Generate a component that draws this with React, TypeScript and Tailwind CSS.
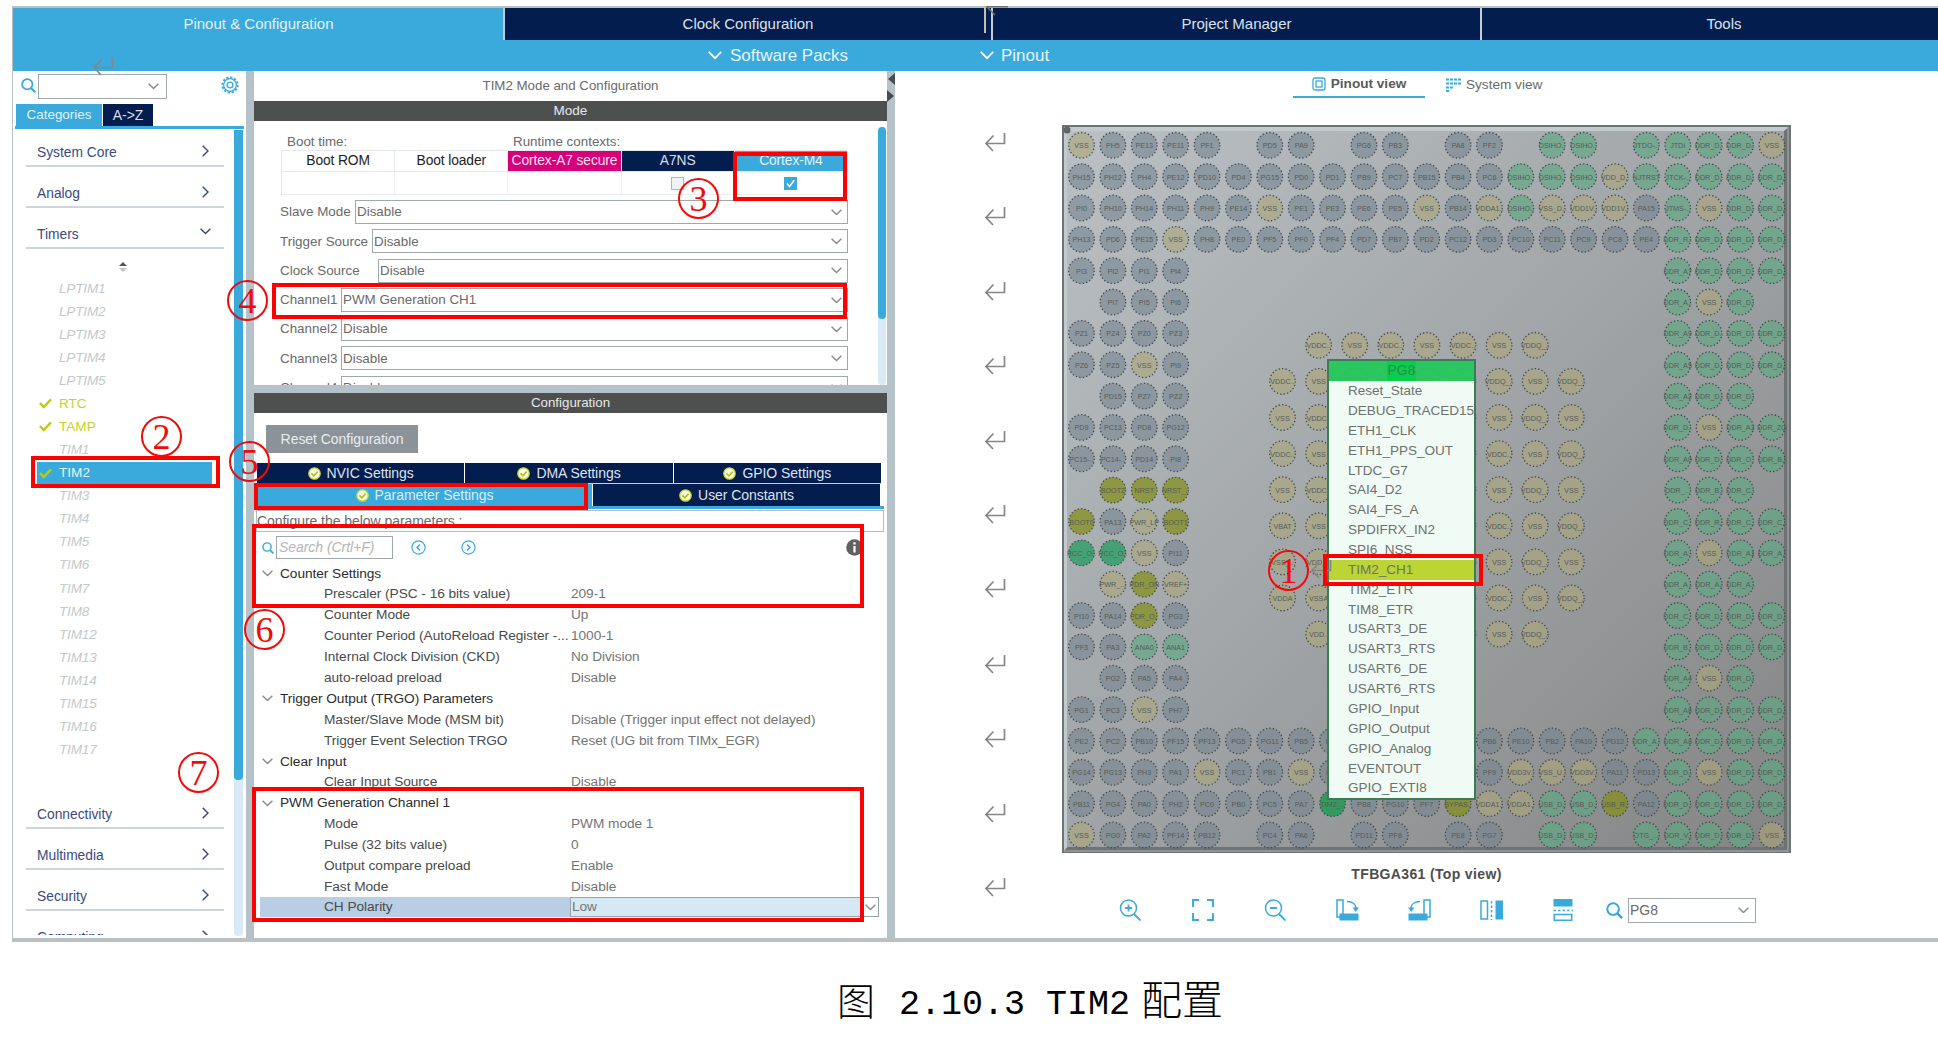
import React from "react";

const RING = "stroke-[#3f4649]";

const outerRows: string[] = [
  "VSS PH5 PE13 PE11 PF1 - PD5 PA9 - PG6 PB3 - PA8 PF2 - DSIHO.. DSIHO.. - JTDO-.. JTDI DDR_D.. DDR_D.. VSS",
  "PH15 PH12 PH4 PE12 PD10 PD4 PG15 PD0 PD1 PB9 PC7 PB15 PB4 PC6 DSIHO.. DSIHO.. DSIHO.. VDD_D.. NJTRST JTCK-.. DDR_D.. DDR_D.. DDR_D..",
  "PI0 PH10 PH14 PH11 PH9 PE14 VSS PE1 PE3 PE6 PE5 VSS PB14 VDDA1.. DSIHO.. VSS_D.. VDD1V.. VDD1V.. PA15 JTMS-.. VSS DDR_D.. DDR_D..",
  "PH13 PD6 PE15 VSS PH8 PE0 PF5 PF0 PF4 PD7 PB7 PD2 PC12 PD3 PC10 PC11 PC9 PC8 PE4 DDR_R.. DDR_D.. DDR_D.. DDR_D..",
  "PI3 PI2 PI1 PI4 | DDR_A7 DDR_D.. DDR_D.. DDR_D..",
  "- PI7 PI5 PI6 | DDR_A.. VSS DDR_D.. -",
  "PZ1 PZ4 PZ0 PZ3 | DDR_A9 DDR_D.. DDR_D.. DDR_D..",
  "PZ6 PZ5 VSS PI9 | DDR_A5 DDR_D.. DDR_D.. DDR_D..",
  "- PD15 PZ7 PZ2 | DDR_A2 DDR_D.. DDR_D.. -",
  "PD9 PC13 PD8 PG12 | DDR_D.. VSS DDR_A3 DDR_ZQ",
  "PC15-.. PC14-.. PD14 PI8 | DDR_A0 DDR_D.. DDR_O.. DDR_B..",
  "- BOOT2 NRST NRST_.. | DDR_... DDR_B.. DDR_C.. -",
  "BOOT0 PA13 PWR_LP BOOT1 | DDR_C.. DDR_R.. DDR_C.. DDR_C..",
  "RCC_O.. RCC_O.. VSS PI11 | DDR_A.. VSS DDR_A1 DDR_A..",
  "- PWR_... PDR_ON VREF+ | DDR_A.. DDR_A.. DDR_A.. -",
  "PI10 PA14 PDR_O.. PG3 | DDR_C.. DDR_D.. DDR_D.. DDR_D..",
  "PF3 PA3 ANA0 ANA1 | DDR_B.. DDR_D.. DDR_D.. DDR_D..",
  "- PG2 PA5 PA4 | DDR_A4 VSS DDR_D.. -",
  "PG1 PC3 VSS PH7 | DDR_A6 DDR_D.. DDR_D.. DDR_D..",
  "PE2 PC2 PB10 PF15 PF13 PG5 PG11 PB5 PE7 - - - - PB6 PE10 PB2 PA10 PD12 DDR_A.. DDR_A8 DDR_D.. DDR_D.. DDR_D..",
  "PG14 PG13 PH3 PA1 VSS PC1 PB1 VSS PF6 - - - - PF9 VDD3V.. VSS_U.. VDD3V.. PA11 PD13 DDR_D.. VSS DDR_D.. DDR_D..",
  "PB11 PG4 PA0 PH2 PC0 PB0 PC5 PA7 TIM2_.. PB8 PG10 PF7 BYPAS.. VDDA1.. VDDA1.. USB_D.. USB_D.. USB_R.. PA12 DDR_D.. DDR_D.. DDR_D.. DDR_D..",
  "VSS PG0 PA2 PF14 PB12 - PC4 PA6 - PD11 PF8 - PE8 PG7 - USB_D.. USB_D.. - OTG_... DDR_V.. DDR_D.. DDR_D.. VSS",
];

const innerRows: string[] = [
  "- VDDC.. VSS VDDC.. VSS VDDC.. VSS VDDQ_.. -",
  "VDDC.. VSS VDDC.. VSS VDDC.. VSS VDDQ_.. VSS VDDQ_..",
  "VSS VDDC.. - - - VDDC.. VSS VDDQ_.. VSS",
  "VDDC.. VSS - - - VSS VDDC.. VSS VDDQ_..",
  "VSS VDDC.. - - - VDDC.. VSS VDDQ_.. VSS",
  "VBAT VSS - - - VSS VDDC.. VSS VDDQ_..",
  "VSS_.. VDD_.. - - - VDDC.. VSS VDDQ_.. VSS",
  "VDDA VSSA - - - VSS VDDC.. VSS VDDQ_..",
  "- VDD.. VSS - - VDDC.. VSS VDDQ_.. -",
];

function ballFill(name: string) {
  if (/^(TIM2)/.test(name)) return "fill-[#229a55]/85";
  if (/^(RCC)/.test(name)) return "fill-[#2c9d66]/80";
  if (/^(BOOT|NRST|PDR|BYPAS|USB_R)/.test(name)) return "fill-[#858f1e]/75";
  if (/^(DSI|J|NJ|DDR|USB|OTG|ANA)/.test(name)) return "fill-[#5ea783]/65";
  if (/^(V|PWR)/.test(name)) return "fill-[#aca67a]/60";
  return "fill-[#77838f]/60";
}

function Ball({ x, y, name }: { x: number; y: number; name: string }) {
  return (
    <g>
      <circle cx={x} cy={y} r={12.8} className={`${ballFill(name)} ${RING}`} strokeWidth={1.3} strokeDasharray="1.3 2.2" />
      <text x={x} y={y + 3} textAnchor="middle" className="fill-[#555b58] text-[7.2px]">
        {name}
      </text>
    </g>
  );
}

function Chip() {
  const balls: React.ReactNode[] = [];
  outerRows.forEach((row, r) => {
    const [left, right] = row.split(" | ");
    left.split(" ").forEach((n, c) => {
      if (n !== "-") balls.push(<Ball key={`o${r}-${c}`} x={19.5 + c * 31.38} y={20.3 + r * 31.35} name={n} />);
    });
    right?.split(" ").forEach((n, c) => {
      if (n !== "-") balls.push(<Ball key={`r${r}-${c}`} x={19.5 + (c + 19) * 31.38} y={20.3 + r * 31.35} name={n} />);
    });
  });
  innerRows.forEach((row, r) =>
    row.split(" ").forEach((n, c) => {
      if (n !== "-") balls.push(<Ball key={`i${r}-${c}`} x={220.5 + c * 36.1} y={220.3 + r * 36.1} name={n} />);
    })
  );
  return (
    <svg width="729" height="728" viewBox="0 0 729 728" className="block">
      <defs>
        <linearGradient id="pkg" x1="0" y1="0" x2="1" y2="1">
          <stop offset="0" stopColor="#bac0c4" />
          <stop offset="0.5" stopColor="#a0a4a6" />
          <stop offset="1" stopColor="#848484" />
        </linearGradient>
      </defs>
      <rect width="729" height="728" fill="#6d7476" />
      <rect x="2" y="2" width="725" height="724" fill="#8a9193" />
      <path d="M2 2H727L723 6H6V722L2 726Z" fill="#c3cacd" />
      <path d="M727 2V726H2L6 721.500H722V6Z" fill="#6f7272" />
      <rect x="5" y="6" width="717" height="716" fill="url(#pkg)" />
      <path d="M726 2V726H2" fill="none" stroke="#9a9d9d" strokeWidth="1.5" />
      <circle cx="5" cy="5" r="3.500" fill="#5e6668" />
      {balls}
    </svg>
  );
}

function Chevron({ dir = "down", className = "text-[#8a8a8a]", w = 11 }: { dir?: "down" | "right"; className?: string; w?: number }) {
  return dir === "down" ? (
    <svg width={w} height={w * 0.6} viewBox="0 0 11 6.600" fill="none" stroke="currentColor" strokeWidth="1.400" className={`shrink-0 ${className}`}>
      <path d="M0.600 0.700 5.500 5.600 10.400 0.700" />
    </svg>
  ) : (
    <svg width="7" height="12" viewBox="0 0 7 12" fill="none" stroke="currentColor" strokeWidth="1.500" className={`shrink-0 ${className}`}>
      <path d="M0.700 0.700 6 6 0.700 11.300" />
    </svg>
  );
}

function SearchIcon({ size, className = "" }: { size: number; className?: string }) {
  return (
    <svg width={size} height={size} viewBox="0 0 16 16" fill="none" stroke="#3aa9dc" strokeWidth="1.900" className={`shrink-0 ${className}`}>
      <circle cx="6.700" cy="6.700" r="5.500" />
      <path d="M10.700 10.700 15.200 15.200" strokeWidth="2.400" />
    </svg>
  );
}

function Gear() {
  return (
    <svg width="18" height="18" viewBox="0 0 18 18" fill="none" stroke="#3aa9dc" strokeWidth="1.200">
      <circle cx="9" cy="9" r="7.600" strokeWidth="2" strokeDasharray="2.200 1.780" />
      <circle cx="9" cy="9" r="6.300" />
      <circle cx="9" cy="9" r="2.900" strokeWidth="1.400" />
    </svg>
  );
}

function Tick() {
  return (
    <svg width="13" height="11" viewBox="0 0 13 11" fill="none" stroke="#b9cc12" strokeWidth="2.400">
      <path d="M0.900 5 4.700 9 12 1.300" />
    </svg>
  );
}

function OkBadge() {
  return (
    <svg width="13" height="13" viewBox="0 0 13 13" className="shrink-0">
      <circle cx="6.500" cy="6.500" r="5.700" fill="#fbfde8" stroke="#c3d43a" strokeWidth="1.300" />
      <path d="M3.400 6.300 5.900 8.800 9.700 4.700" fill="none" stroke="#b1c31b" strokeWidth="1.700" />
    </svg>
  );
}

function ReturnMark({ className = "" }: { className?: string }) {
  return (
    <svg width="21" height="19" viewBox="0 0 21 19" fill="none" stroke="#868686" strokeWidth="1.700" className={`absolute ${className}`}>
      <path d="M19.500 0V10.500H1.500M8.500 2.500 1 10.500 8 18" />
    </svg>
  );
}

function Category({ label, open }: { label: string; open?: boolean }) {
  return (
    <div className="ml-[13px] flex h-[41px] w-[198px] shrink-0 items-end justify-between border-b-2 border-[#ccd5da] pb-[4px] pr-[15px] pl-[11px] text-[13.8px] text-[#3a4a80]">
      <span className="leading-[17px]">{label}</span>
      <Chevron dir={open ? "down" : "right"} className={open ? "mb-[8px] -mr-[2px]" : "mb-[4px]"} />
    </div>
  );
}

const timers = ["LPTIM1", "LPTIM2", "LPTIM3", "LPTIM4", "LPTIM5", "RTC", "TAMP", "TIM1", "TIM2", "TIM3", "TIM4", "TIM5", "TIM6", "TIM7", "TIM8", "TIM12", "TIM13", "TIM14", "TIM15", "TIM16", "TIM17"];

function Sidebar() {
  return (
    <div className="flex h-[867px] w-[233px] shrink-0 flex-col">
      <div className="flex h-[33px] shrink-0 items-start pl-[8px] pt-[3px]">
        <SearchIcon size={15} className="mt-[4px]" />
        <div className="ml-[2px] flex h-[25px] w-[129px] items-center justify-end border border-[#a1a8ac] pr-[7px]">
          <Chevron />
        </div>
        <div className="ml-[54px] mt-[2px]">
          <Gear />
        </div>
      </div>
      <div className="ml-[2px] flex h-[25px] w-[229px] shrink-0 items-stretch border-b-[3px] border-[#3aa9dc] pl-[1px] text-[13.400px]">
        <div className="flex w-[86px] items-center justify-center bg-[#3aa9dc] text-[#e3f3fb]">Categories</div>
        <div className="ml-px flex w-[50px] items-center justify-center bg-[#031d4e] text-[14px] text-[#d9deea]">A-&gt;Z</div>
      </div>
      <div className="flex min-h-0 flex-1">
        <div className="flex h-[806px] w-[221px] flex-col overflow-hidden">
          <div className="h-[-3px]" />
          <div className="-mt-[3px]">
            <Category label="System Core" />
            <Category label="Analog" />
            <Category label="Timers" open />
          </div>
          <div className="ml-[106px] mt-[13px] flex h-[12px] shrink-0 flex-col items-center gap-[2px] self-start">
            <span className="border-x-[4px] border-b-[4px] border-x-transparent border-b-[#555]" />
            <span className="border-x-[4px] border-t-[4px] border-x-transparent border-t-[#c4c4c4]" />
          </div>
          <div className="mt-[3px] shrink-0">
            {timers.map((t) => {
              const on = t === "RTC" || t === "TAMP";
              const sel = t === "TIM2";
              return (
                <div
                  key={t}
                  className={`ml-[24px] flex h-[23.070px] w-[175px] items-center text-[13.600px] ${
                    sel ? "bg-[#3aa9dc] text-[#e6f4fb]" : on ? "text-[#c2d332]" : "italic tracking-[-0.200px] text-[#c3c9cc]"
                  }`}
                >
                  <span className="w-[22px] pl-[2px]">{(on || sel) && <Tick />}</span>
                  {t}
                </div>
              );
            })}
          </div>
          <div className="mt-[27px] flex flex-col">
            <Category label="Connectivity" />
            <Category label="Multimedia" />
            <Category label="Security" />
            <Category label="Computing" />
          </div>
        </div>
        <div className="mt-[1px] h-[806px] w-[9px] rounded-b bg-[#d9e9f6]">
          <div className="h-[650px] rounded-b bg-[#3aa9dc]" />
        </div>
      </div>
    </div>
  );
}

const modeRows = [
  { label: "Slave Mode", w: "w-[493px]", v: "Disable" },
  { label: "Trigger Source", w: "w-[476px]", v: "Disable" },
  { label: "Clock Source", w: "w-[470px]", v: "Disable" },
  { label: "Channel1", w: "w-[507px]", v: "PWM Generation CH1" },
  { label: "Channel2", w: "w-[507px]", v: "Disable" },
  { label: "Channel3", w: "w-[507px]", v: "Disable" },
  { label: "Channel4", w: "w-[507px]", v: "Disable" },
];

const contexts = [
  { name: "Boot ROM", cls: "text-[#222]" },
  { name: "Boot loader", cls: "text-[#222]" },
  { name: "Cortex-A7 secure", cls: "bg-[#d6007b] text-[#fbe0ef]" },
  { name: "A7NS", cls: "bg-[#031d4e] text-[#d9deea]" },
  { name: "Cortex-M4", cls: "bg-[#3aa9dc] text-[#e3f3fb]" },
];

function ModePanel() {
  return (
    <div className="flex h-[264px] shrink-0 overflow-hidden">
      <div className="w-[624px] pl-[26px] text-[13.400px] text-[#6a6a6a]">
        <div className="flex h-[29px] items-end pb-[1px] pl-[7px]">
          <span className="w-[226px]">Boot time:</span>
          <span>Runtime contexts:</span>
        </div>
        <div className="ml-px grid w-[567px] grid-cols-5 border-l border-t border-[#e6e9eb]">
          {contexts.map((c) => (
            <div key={c.name} className={`flex h-[21px] items-center justify-center whitespace-nowrap border-r border-b border-[#e6e9eb] text-[13.800px] tracking-[-0.100px] ${c.cls}`}>
              {c.name}
            </div>
          ))}
          {contexts.map((c) => (
            <div key={c.name} className="flex h-[23px] items-center justify-center border-r border-b border-[#eceeef]">
              {c.name === "A7NS" && <span className="h-[13px] w-[13px] border border-[#b0b6ba] bg-[#f0f2f3]" />}
              {c.name === "Cortex-M4" && (
                <svg width="13" height="13" viewBox="0 0 13 13">
                  <rect width="13" height="13" fill="#3aa9dc" />
                  <path d="M3 6.500 5.500 9.500 10.200 3.300" fill="none" stroke="#fff" strokeWidth="1.500" />
                </svg>
              )}
            </div>
          ))}
        </div>
        <div className="mt-[5px] flex flex-col gap-[5.300px]">
          {modeRows.map((r) => (
            <div key={r.label} className="flex h-[24px] w-[568px] items-center justify-between">
              <span>{r.label}</span>
              <div className={`flex h-[24px] items-center justify-between border border-[#a1a8ac] pl-[1px] pr-[5px] ${r.w}`}>
                <span>{r.v}</span>
                <Chevron />
              </div>
            </div>
          ))}
        </div>
      </div>
      <div className="mt-[6px] h-[258px] w-[8px] rounded bg-[#d9e9f6]">
        <div className="h-[192px] rounded bg-[#3aa9dc]" />
      </div>
    </div>
  );
}

type Param = { g?: boolean; n: string; v?: string };
const params: Param[] = [
  { g: true, n: "Counter Settings" },
  { n: "Prescaler (PSC - 16 bits value)", v: "209-1" },
  { n: "Counter Mode", v: "Up" },
  { n: "Counter Period (AutoReload Register -...", v: "1000-1" },
  { n: "Internal Clock Division (CKD)", v: "No Division" },
  { n: "auto-reload preload", v: "Disable" },
  { g: true, n: "Trigger Output (TRGO) Parameters" },
  { n: "Master/Slave Mode (MSM bit)", v: "Disable (Trigger input effect not delayed)" },
  { n: "Trigger Event Selection TRGO", v: "Reset (UG bit from TIMx_EGR)" },
  { g: true, n: "Clear Input" },
  { n: "Clear Input Source", v: "Disable" },
  { g: true, n: "PWM Generation Channel 1" },
  { n: "Mode", v: "PWM mode 1" },
  { n: "Pulse (32 bits value)", v: "0" },
  { n: "Output compare preload", v: "Enable" },
  { n: "Fast Mode", v: "Disable" },
];

function StepArrow({ flip }: { flip?: boolean }) {
  return (
    <svg width="15" height="15" viewBox="0 0 15 15" fill="none" stroke="#3aa9dc" strokeWidth="1.200" className={flip ? "rotate-180" : ""}>
      <circle cx="7.500" cy="7.500" r="6.600" />
      <path d="M8.900 4.500 6 7.500 8.900 10.500" strokeWidth="1.500" />
    </svg>
  );
}

function ConfigPanel() {
  return (
    <div className="flex flex-1 flex-col text-[13.700px] tracking-[-0.050px]">
      <div className="ml-[12px] mt-[12px] flex h-[28px] w-[152px] shrink-0 items-center justify-center bg-[#8b9398] text-[14px] text-[#e9ecee]">Reset Configuration</div>
      <div className="ml-[3px] mt-[10px] flex h-[21px] w-[624px] shrink-0 gap-px border-b border-[#c8cdd6] text-[14px] text-[#dfe3ee]">
        {["NVIC Settings", "DMA Settings", "GPIO Settings"].map((t) => (
          <div key={t} className="flex flex-1 items-center justify-center gap-[6px] bg-[#031d4e]">
            <OkBadge />
            {t}
          </div>
        ))}
      </div>
      <div className="ml-[3px] flex h-[25px] w-[627px] shrink-0 gap-px border-b-[3px] border-[#3aa9dc] text-[14px]">
        <div className="flex w-[335px] items-center justify-center gap-[6px] bg-[#3aa9dc] text-[#d8eefa]">
          <OkBadge />
          Parameter Settings
        </div>
        <div className="flex w-[287px] items-center justify-center gap-[6px] bg-[#031d4e] text-[#dfe3ee]">
          <OkBadge />
          User Constants
        </div>
      </div>
      <div className="ml-[2px] mt-px flex h-[22px] w-[628px] shrink-0 items-center border border-[#b4bbbf] text-[14px] text-[#6a6a6a]">Configure the below parameters :</div>
      <div className="flex h-[31px] shrink-0 items-center pl-[8px]">
        <SearchIcon size={12} />
        <div className="ml-[2px] flex h-[23px] w-[117px] items-center border border-[#a1a8ac] pl-[2px] text-[14px] italic text-[#b5b5b5]">Search (Crtl+F)</div>
        <div className="ml-[18px]">
          <StepArrow />
        </div>
        <div className="ml-[35px]">
          <StepArrow flip />
        </div>
        <svg width="17" height="17" viewBox="0 0 17 17" className="ml-[370px]">
          <circle cx="8.500" cy="8.500" r="8.300" fill="#616161" />
          <path d="M8.500 7V13.500M8.500 3.200V5.400" stroke="#fff" strokeWidth="2.200" />
        </svg>
      </div>
      <div className="flex shrink-0 flex-col">
        {params.map((p) =>
          p.g ? (
            <div key={p.n} className="flex h-[20.900px] items-center pl-[8px] text-[#2c2c2c]">
              <Chevron />
              <span className="ml-[7px]">{p.n}</span>
            </div>
          ) : (
            <div key={p.n} className="flex h-[20.900px] items-center pl-[70px] whitespace-nowrap">
              <span className="w-[247px] text-[#4a4a4a]">{p.n}</span>
              <span className="text-[#747474]">{p.v}</span>
            </div>
          )
        )}
        <div className="flex h-[20px] w-[625px] items-stretch pl-[6px]">
          <span className="flex w-[310px] items-center bg-[#b8cee5] pl-[64px] text-[#4a4a4a]">CH Polarity</span>
          <span className="flex flex-1 items-center justify-between border border-[#9aa2a7] bg-[#d7e8f5] pl-[1px] text-[#747474]">
            Low
            <span className="flex h-full w-[15px] items-center justify-center bg-white">
              <Chevron />
            </span>
          </span>
        </div>
      </div>
    </div>
  );
}

const menu = ["Reset_State", "DEBUG_TRACED15", "ETH1_CLK", "ETH1_PPS_OUT", "LTDC_G7", "SAI4_D2", "SAI4_FS_A", "SPDIFRX_IN2", "SPI6_NSS", "TIM2_CH1", "TIM2_ETR", "TIM8_ETR", "USART3_DE", "USART3_RTS", "USART6_DE", "USART6_RTS", "GPIO_Input", "GPIO_Output", "GPIO_Analog", "EVENTOUT", "GPIO_EXTI8"];

function PinMenu() {
  return (
    <div className="absolute left-[265px] top-[234px] flex h-[441px] w-[149px] flex-col border-2 border-[#3d7b57] text-[13.500px] text-[#6c716e]">
      <div className="flex h-[20px] shrink-0 justify-center bg-[#25c75d]/95 text-[14px] text-[#2d8a4d]">
        <span className="bg-[#05cf4c] leading-[19px]">PG8</span>
      </div>
      <div className="flex-1 overflow-hidden bg-[#f0fbf5]">
        {menu.map((m) => (
          <div key={m} className={`flex h-[19.870px] items-center pl-[19px] ${m === "TIM2_CH1" ? "bg-[#bcd535]" : ""}`}>
            {m}
          </div>
        ))}
      </div>
    </div>
  );
}

function Toolbar() {
  const s = { fill: "none", stroke: "#3aa9dc", strokeWidth: 1.5 };
  return (
    <div className="flex h-[26px] items-center pl-[224px]">
      <svg width="22" height="22" viewBox="0 0 22 22" {...s}>
        <circle cx="9.500" cy="9" r="8" />
        <path d="M15 15 21.500 21.500M6 9H13M9.500 5.500V12.500" strokeWidth="1.800" />
      </svg>
      <svg width="22" height="22" viewBox="0 0 22 22" className="ml-[51px]" {...s} strokeWidth={1.9}>
        <path d="M1 8V1H7M15 1H21V8M21 14V21H15M7 21H1V14" />
      </svg>
      <svg width="22" height="22" viewBox="0 0 22 22" className="ml-[50px]" {...s}>
        <circle cx="9.500" cy="9" r="8" />
        <path d="M15 15 21.500 21.500M6 9H13" strokeWidth="1.800" />
      </svg>
      <svg width="23" height="22" viewBox="0 0 23 22" className="ml-[50px]" {...s}>
        <path d="M1 1H7V18H1Z" />
        <path d="M3.500 14.500H22.500V21.500H3.500Z" fill="#3aa9dc" stroke="none" />
        <path d="M11 2.500C16 2.500 20 5 20 9" />
        <path d="M16.500 8.500H23L19.800 13Z" fill="#3aa9dc" stroke="none" />
      </svg>
      <svg width="23" height="22" viewBox="0 0 23 22" className="ml-[49px]" {...s}>
        <path d="M22 1H16V18H22Z" />
        <path d="M0.500 14.500H19.500V21.500H0.500Z" fill="#3aa9dc" stroke="none" />
        <path d="M12 2.500C7 2.500 3 5 3 9" />
        <path d="M0 8.500H6.500L3.200 13Z" fill="#3aa9dc" stroke="none" />
      </svg>
      <svg width="23" height="20" viewBox="0 0 23 20" className="ml-[49px]" {...s}>
        <path d="M1 1H7.500V19H1Z" />
        <path d="M11.500 1V20" strokeDasharray="2.500 2" />
        <path d="M15.500 0.500H23V19.500H15.500Z" fill="#3aa9dc" stroke="none" />
      </svg>
      <svg width="20" height="22" viewBox="0 0 20 22" className="ml-[50px]" {...s}>
        <path d="M0.500 0H19.500V7.500H0.500Z" fill="#3aa9dc" stroke="none" />
        <path d="M0.500 11.500H20" strokeDasharray="2.500 2" />
        <path d="M1.200 15.500H18.800V21.200H1.200Z" />
      </svg>
      <SearchIcon size={17} className="ml-[33px]" />
      <div className="ml-[5px] flex h-[25px] w-[128px] items-center justify-between border border-[#a1a8ac] pl-px pr-[6px] text-[14px] text-[#6a6a6a]">
        PG8
        <Chevron />
      </div>
    </div>
  );
}

function PinoutPanel() {
  return (
    <div className="flex flex-1 flex-col">
      <div className="flex h-[28px] shrink-0 pl-[398px] text-[13.600px]">
        <div className="flex h-[27px] w-[132px] items-center justify-center gap-[5px] border-b-2 border-[#3aa9dc] font-bold text-[#5a5a5a]">
          <svg width="14" height="14" viewBox="0 0 14 14" fill="none" stroke="#3aa9dc" strokeWidth="1.300">
            <rect x="1" y="1" width="12" height="12" rx="2" />
            <rect x="4" y="4" width="6" height="6" />
          </svg>
          Pinout view
        </div>
        <div className="ml-[21px] flex items-center gap-[5px] text-[#6a6a6a]">
          <svg width="15" height="14" viewBox="0 0 15 14" fill="none" stroke="#3aa9dc" strokeWidth="2">
            <path d="M0 1.500H15M0 5.500H15" strokeDasharray="3 1" />
            <path d="M0 9.500H7M0 13H3" strokeDasharray="3 1" />
          </svg>
          System view
        </div>
      </div>
      <div className="relative ml-[167px] mt-[26px] h-[728px] w-[729px] shrink-0">
        <Chip />
        <PinMenu />
      </div>
      <div className="ml-[167px] mt-[11px] flex h-[20px] w-[729px] items-center justify-center text-[14px] font-bold tracking-[0.350px] text-[#4d4d4d]">TFBGA361 (Top view)</div>
      <div className="mt-[13px]">
        <Toolbar />
      </div>
    </div>
  );
}

function Step({ n, className }: { n: string; className: string }) {
  return (
    <span className={`absolute flex h-[41px] w-[41px] items-center justify-center rounded-full border-2 border-[#f00a0a] font-['Liberation_Serif',serif] text-[36px] leading-none text-[#f00a0a] ${className}`}>
      {n}
    </span>
  );
}

function Frame({ className }: { className: string }) {
  return <div className={`absolute border-[#ff0000] ${className}`} />;
}

export default function App() {
  return (
    <div className="relative h-[1046px] w-[1938px] overflow-hidden bg-white font-['Liberation_Sans',Arial,sans-serif] leading-[1.15]">
      <div className="ml-[12px] mt-[6px] flex h-[936px] flex-col border-b-[4px] border-l border-t-2 border-[#b9bfc2]">
        <div className="flex h-[32px] shrink-0 gap-[2px] bg-[#c3cbd3] text-[15px] text-[#dbe1ec]">
          <div className="flex w-[490px] items-center justify-center bg-[#3aa9dc] pl-[3px] text-[#e3f3fb]">
            <span className="pr-[2px]">Pinout &amp; Configuration</span>
          </div>
          <div className="flex w-[486px] items-center justify-center bg-[#031d4e]">Clock Configuration</div>
          <div className="flex w-[487px] items-center justify-center bg-[#031d4e]">Project Manager</div>
          <div className="flex flex-1 items-center justify-center bg-[#031d4e] pl-[28px]">Tools</div>
        </div>
        <div className="flex h-[31px] shrink-0 items-center bg-[#3aa9dc] pl-[695px] text-[17px] text-[#e9f6fc]">
          <Chevron w={14} className="text-white" />
          <span className="ml-[8px] w-[119px] whitespace-nowrap">Software Packs</span>
          <Chevron w={14} className="ml-[131px] text-white" />
          <span className="ml-[7px]">Pinout</span>
        </div>
        <div className="flex h-[867px] shrink-0">
          <Sidebar />
          <div className="w-[8px] shrink-0 bg-[#b5c2c9]" />
          <div className="flex w-[633px] shrink-0 flex-col">
            <div className="flex h-[30px] shrink-0 items-center justify-center text-[13.300px] text-[#6a6a6a]">TIM2 Mode and Configuration</div>
            <div className="flex h-[20px] shrink-0 items-center justify-center bg-[#4e5050] text-[13.500px] text-[#e8e8e8]">Mode</div>
            <ModePanel />
            <div className="h-[8px] shrink-0 bg-[#b5c2c9]" />
            <div className="flex h-[20px] shrink-0 items-center justify-center bg-[#4e5050] text-[13.300px] text-[#e8e8e8]">Configuration</div>
            <ConfigPanel />
          </div>
          <div className="flex w-[8px] shrink-0 flex-col gap-[5px] bg-[#b5c2c9] pt-[2px]">
            <span className="border-y-[6px] border-r-[7px] border-y-transparent border-r-[#4a4d4f]" />
            <span className="border-y-[6px] border-l-[7px] border-y-transparent border-l-[#4a4d4f]" />
          </div>
          <PinoutPanel />
        </div>
      </div>
      <div className="mt-[36px] flex h-[54px] items-center pl-[837px] font-['Liberation_Mono','Noto_Sans_CJK_SC',monospace] text-[35px] text-black">
        <span className="w-[62px] text-[38px] font-light">图</span>
        <span className="w-[242px] whitespace-pre">2.10.3 TIM2</span>
        <span className="text-[41px] font-light">配置</span>
      </div>

      <ReturnMark className="left-[93px] top-[57px]" />
      <ReturnMark className="left-[985px] top-[133px]" />
      <ReturnMark className="left-[985px] top-[207px]" />
      <ReturnMark className="left-[985px] top-[282px]" />
      <ReturnMark className="left-[985px] top-[356px]" />
      <ReturnMark className="left-[985px] top-[431px]" />
      <ReturnMark className="left-[985px] top-[505px]" />
      <ReturnMark className="left-[985px] top-[579px]" />
      <ReturnMark className="left-[985px] top-[655px]" />
      <ReturnMark className="left-[985px] top-[729px]" />
      <ReturnMark className="left-[985px] top-[804px]" />
      <ReturnMark className="left-[985px] top-[878px]" />
      <ReturnMark className="left-[1311px] top-[560px]" />
      <div className="absolute left-[984px] top-[8px] h-[25px] w-[2px] bg-[#c9bda6]" />
      <svg width="24" height="10" viewBox="0 0 24 10" fill="none" stroke="#76706a" strokeWidth="1.500" className="absolute left-[985px] top-[6px]">
        <path d="M1 0.800H23M2 1 10 9" />
      </svg>

      <Frame className="left-[31px] top-[456px] h-[32px] w-[189px] border-[4px]" />
      <Frame className="left-[272px] top-[283px] h-[36px] w-[575px] border-[4px]" />
      <Frame className="left-[733px] top-[152px] h-[49px] w-[114px] border-[4px]" />
      <Frame className="left-[254px] top-[483px] h-[27px] w-[334px] border-[4px]" />
      <Frame className="left-[252px] top-[524px] h-[84px] w-[612px] border-[4px]" />
      <Frame className="left-[252px] top-[787px] h-[135px] w-[612px] border-[4px]" />
      <Frame className="left-[1323px] top-[554px] h-[32px] w-[160px] border-[4px]" />

      <Step n="1" className="left-[1268px] top-[550px]" />
      <Step n="2" className="left-[141px] top-[416px]" />
      <Step n="3" className="left-[678px] top-[178px]" />
      <Step n="4" className="left-[227px] top-[280px]" />
      <Step n="5" className="left-[229px] top-[441px]" />
      <Step n="6" className="left-[244px] top-[609px]" />
      <Step n="7" className="left-[178px] top-[752px]" />
    </div>
  );
}
